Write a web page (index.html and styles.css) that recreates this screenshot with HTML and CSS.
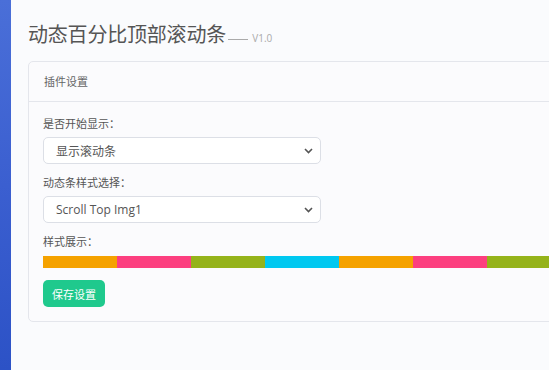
FILE: index.html
```html
<!DOCTYPE html>
<html lang="zh-CN">
<head>
    <meta charset="UTF-8">
    <meta name="viewport" content="width=device-width, initial-scale=1.0">
    <title>动态百分比顶部滚动条</title>
    <link rel="stylesheet" href="styles.css">
</head>
<body>

<div class="layout">
    <aside class="sidebar"></aside>

    <main class="main">
        <h1 class="page-title">动态百分比顶部滚动条 <small><span class="dash"></span>V1.0</small></h1>

        <div class="card">
            <div class="card-header">插件设置</div>
            <div class="card-body">
                <div class="form-group">
                    <label for="show">是否开始显示：</label>
                    <select id="show">
                        <option>显示滚动条</option>
                        <option>隐藏滚动条</option>
                    </select>
                </div>

                <div class="form-group">
                    <label for="style">动态条样式选择：</label>
                    <select id="style" class="latin">
                        <option>Scroll Top Img1</option>
                        <option>Scroll Top Img2</option>
                    </select>
                </div>

                <div class="form-group preview-group">
                    <label>样式展示：</label>
                    <div class="preview">
                        <span class="orange"></span>
                        <span class="pink"></span>
                        <span class="green"></span>
                        <span class="cyan"></span>
                        <span class="orange"></span>
                        <span class="pink"></span>
                        <span class="green"></span>
                        <span class="cyan"></span>
                    </div>
                </div>

                <button class="btn-save">保存设置</button>
            </div>
        </div>
    </main>
</div>

</body>
</html>
```

FILE: styles.css
```css
body {
    font-family: "Noto Sans CJK SC", "Open Sans", sans-serif;
    background-color: #fafbfd;
    margin: 0;
    padding: 0;
    overflow: hidden;
    color: #555;
}
.layout {
    display: flex;
    width: 549px;
    height: 370px;
    overflow: hidden;
}
.sidebar {
    width: 11px;
    flex-shrink: 0;
    background: linear-gradient(180deg, #4a6fd8 0%, #3b5fd0 50%, #2c52c6 100%);
}
.main {
    flex: 1;
    min-width: 0;
    overflow: hidden;
    padding: 21px 0 0 17px;
}
.page-title {
    margin: 0 0 10px;
    font-size: 20px;
    font-weight: 400;
    color: #555;
    line-height: 26px;
    letter-spacing: -0.2px;
    white-space: nowrap;
}
.page-title small {
    font-family: "Open Sans", sans-serif;
    font-size: 10px;
    color: #aaa;
    letter-spacing: 0;
}
.dash {
    display: inline-block;
    width: 20px;
    height: 1px;
    background-color: #aaa;
    vertical-align: middle;
    margin: 0 4px 0 -2px;
}
.card {
    width: 600px;
    background-color: #fbfbfd;
    border: 1px solid #e4e6ec;
    border-radius: 5px;
}
.card-header {
    height: 39px;
    line-height: 38px;
    padding: 0 15px;
    font-size: 11px;
    color: #666;
    border-bottom: 1px solid #e4e6ec;
}
.card-body {
    padding: 14px 0 14px 14px;
}
.form-group {
    margin-bottom: 11px;
}
.form-group label {
    display: block;
    font-size: 11px;
    line-height: 15px;
    color: #555;
    margin-bottom: 6px;
}
.preview-group label {
    margin-bottom: 7px;
}
.preview-group {
    margin-bottom: 12px;
}
.form-group select {
    display: block;
    width: 278px;
    height: 27px;
    padding: 0 24px 0 12px;
    font-family: "Noto Sans CJK SC", "Open Sans", sans-serif;
    font-size: 12px;
    color: #555;
    background-color: #fff;
    border: 1px solid #dcdfe6;
    border-radius: 5px;
    -webkit-appearance: none;
    appearance: none;
    background-image: url("data:image/svg+xml,%3Csvg xmlns='http://www.w3.org/2000/svg' width='9' height='6' viewBox='0 0 9 6'%3E%3Cpath d='M1 1l3.5 3.5L8 1' fill='none' stroke='%23555' stroke-width='1.6'/%3E%3C/svg%3E");
    background-repeat: no-repeat;
    background-position: right 7px center;
}
.form-group select.latin {
    font-family: "Open Sans", sans-serif;
}
.preview {
    display: flex;
    height: 12px;
}
.preview span {
    width: 74px;
    flex-shrink: 0;
}
.orange { background-color: #f5a200; }
.pink { background-color: #fc3f7f; }
.green { background-color: #95b31a; }
.cyan { background-color: #00c8f0; }
.btn-save {
    display: block;
    width: 62px;
    height: 27px;
    padding: 0;
    border: none;
    border-radius: 5px;
    background-color: #1fc98d;
    color: #fff;
    font-family: "Noto Sans CJK SC", sans-serif;
    font-size: 11px;
    cursor: pointer;
}
```
